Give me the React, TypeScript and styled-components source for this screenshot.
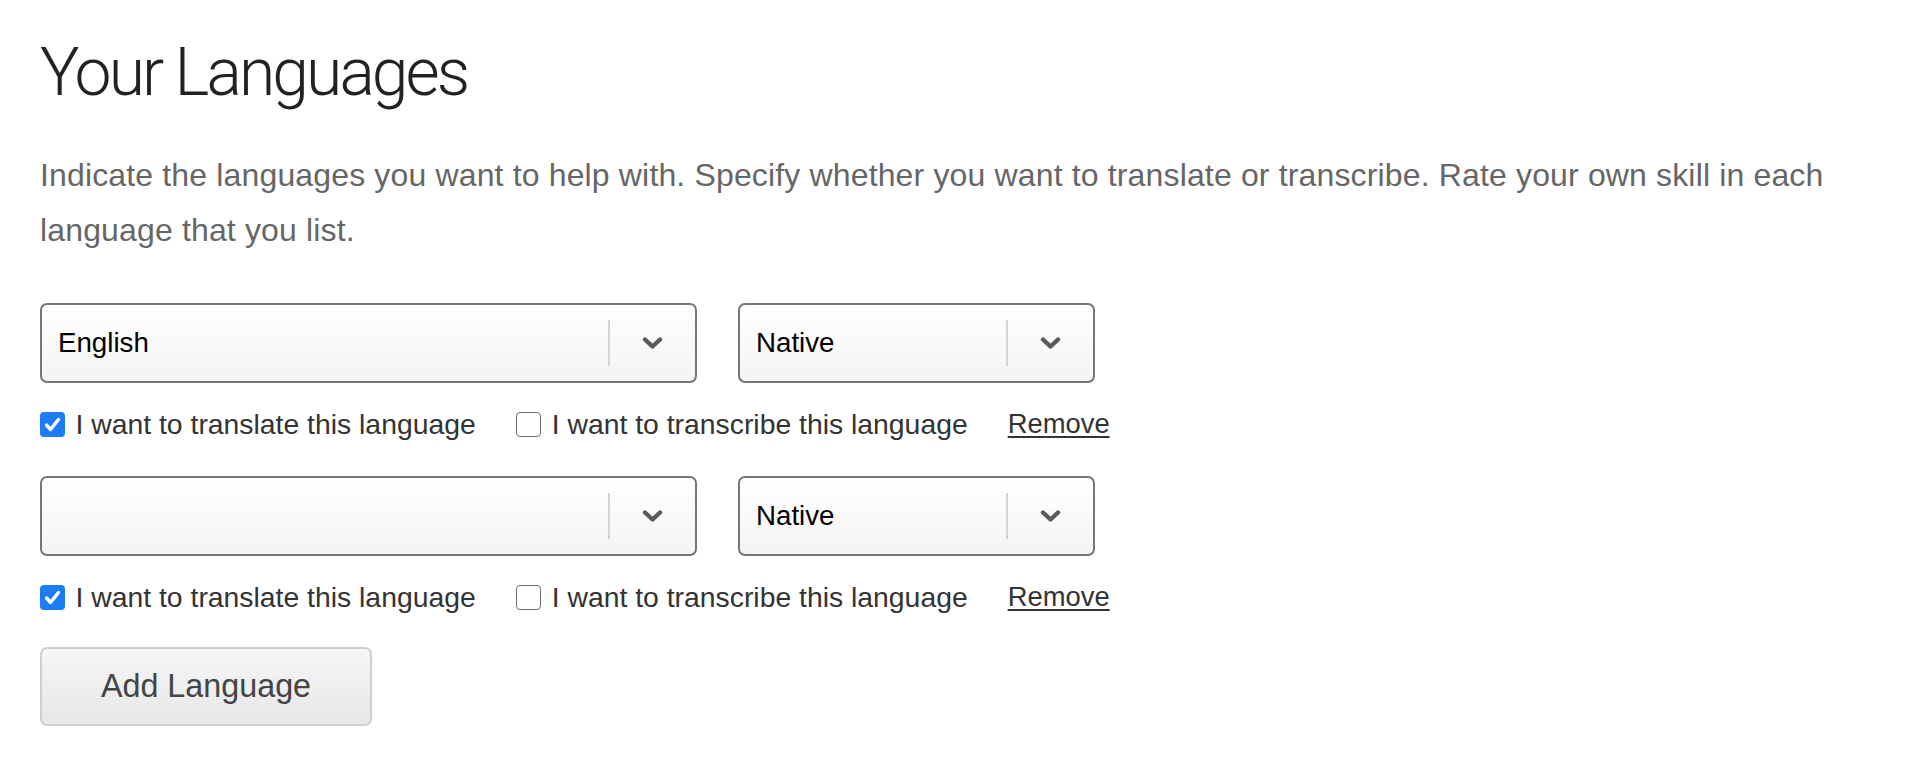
import React from 'react';
import styled, { createGlobalStyle } from 'styled-components';

const GlobalStyle = createGlobalStyle`
  html, body { margin: 0; padding: 0; background: #ffffff; }
  body { font-family: "Liberation Sans", Arial, sans-serif; }
`;

const Page = styled.main`
  padding: 35px 40px 40px 40px;
`;

const Title = styled.h1`
  margin: 0;
  font-family: "Roboto", "Lato", "Liberation Sans", sans-serif;
  font-weight: 300;
  font-size: 66px;
  line-height: 76px;
  letter-spacing: -2.9px;
  color: #222222;
`;

const Intro = styled.p`
  margin: 37px 0 0 0;
  font-size: 32px;
  line-height: 55px;
  letter-spacing: 0.15px;
  color: #666666;
`;

const EntryList = styled.div`
  margin-top: 45px;
  display: flex;
  flex-direction: column;
  gap: 34px;
`;

const Entry = styled.div`
  display: flex;
  flex-direction: column;
  gap: 24px;
`;

const SelectRow = styled.div`
  display: flex;
  gap: 41px;
`;

const SelectBox = styled.div<{ $width: number }>`
  box-sizing: border-box;
  width: ${(p) => p.$width}px;
  height: 80px;
  border: 2px solid #767676;
  border-radius: 7px;
  background: linear-gradient(#ffffff, #f4f4f4);
  display: flex;
  align-items: center;
`;

const SelectValue = styled.span`
  flex: 1;
  padding-left: 16px;
  font-size: 27.7px;
  color: #000000;
`;

const Divider = styled.span`
  width: 2px;
  height: 46px;
  background: #d4d4d4;
`;

const ArrowZone = styled.span`
  width: 85px;
  display: flex;
  justify-content: center;
  align-items: center;
`;

const Chevron = styled.svg`
  width: 21px;
  height: 14px;
  filter: blur(0.5px);
`;

const OptionRow = styled.div`
  display: flex;
  align-items: center;
  height: 34px;
  margin-bottom: 1px;
`;

const Option = styled.label`
  display: flex;
  align-items: center;
  gap: 10.5px;
  margin-right: 40.5px;
  font-size: 28.35px;
  color: #333333;
`;

const Box = styled.span<{ $checked: boolean }>`
  box-sizing: border-box;
  width: 25px;
  height: 25px;
  border-radius: 4px;
  display: flex;
  align-items: center;
  justify-content: center;
  background: ${(p) => (p.$checked ? '#1b7cf6' : '#ffffff')};
  border: ${(p) => (p.$checked ? 'none' : '1.6px solid #6e6e6e')};
`;

const RemoveLink = styled.a`
  margin-left: -0.5px;
  font-size: 27.4px;
  color: #333333;
  text-decoration: underline;
  text-underline-offset: 3px;
`;

const ButtonRow = styled.div`
  margin-top: 32px;
`;

const AddButton = styled.button`
  box-sizing: border-box;
  width: 332px;
  height: 79px;
  border: 2px solid #cfcfcf;
  border-radius: 7px;
  background: linear-gradient(#f6f6f6, #e7e7e7);
  font-family: "Liberation Sans", Arial, sans-serif;
  font-size: 32.3px;
  color: #444444;
  padding: 0;
`;

const Select: React.FC<{ value: string; width: number }> = ({ value, width }) => (
  <SelectBox $width={width}>
    <SelectValue>{value}</SelectValue>
    <Divider />
    <ArrowZone>
      <Chevron viewBox="0 0 21 14">
        <path d="M3 3.5 L10.5 10.5 L18 3.5" fill="none" stroke="#5a5a5a" strokeWidth="4.4" strokeLinecap="round" strokeLinejoin="round" />
      </Chevron>
    </ArrowZone>
  </SelectBox>
);

const Checkbox: React.FC<{ checked: boolean }> = ({ checked }) => (
  <Box $checked={checked}>
    {checked && (
      <svg width="25" height="25" viewBox="0 0 25 25">
        <path d="M6.5 13 L10.5 17.5 L18.5 7.5" fill="none" stroke="#ffffff" strokeWidth="3.4" strokeLinecap="round" strokeLinejoin="round" />
      </svg>
    )}
  </Box>
);

const entries = [
  { language: 'English', level: 'Native' },
  { language: '', level: 'Native' },
];

export default function App() {
  return (
    <>
      <GlobalStyle />
      <Page>
        <Title>Your Languages</Title>
        <Intro>
          Indicate the languages you want to help with. Specify whether you want to translate or transcribe. Rate your own skill in each language that you list.
        </Intro>
        <EntryList>
          {entries.map((e, i) => (
            <Entry key={i}>
              <SelectRow>
                <Select value={e.language} width={657} />
                <Select value={e.level} width={357} />
              </SelectRow>
              <OptionRow>
                <Option>
                  <Checkbox checked />
                  I want to translate this language
                </Option>
                <Option>
                  <Checkbox checked={false} />
                  I want to transcribe this language
                </Option>
                <RemoveLink href="#">Remove</RemoveLink>
              </OptionRow>
            </Entry>
          ))}
        </EntryList>
        <ButtonRow>
          <AddButton>Add Language</AddButton>
        </ButtonRow>
      </Page>
    </>
  );
}
